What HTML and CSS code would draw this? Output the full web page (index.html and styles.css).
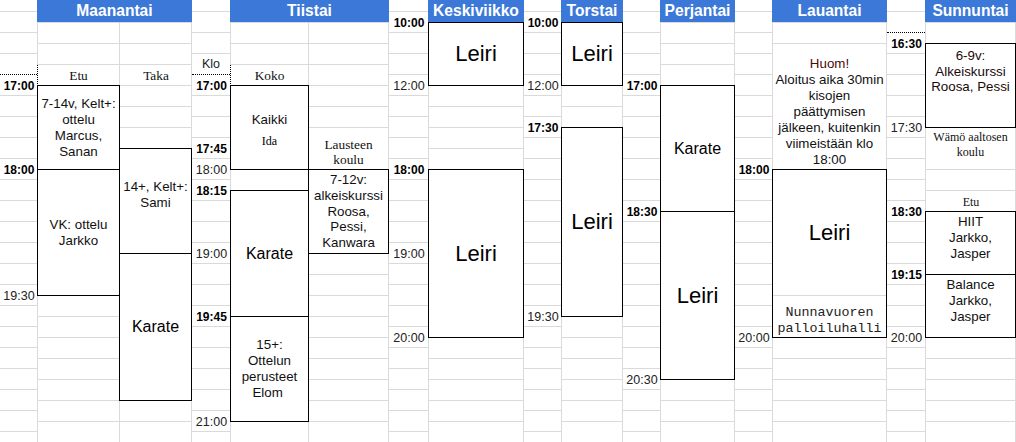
FILE: index.html
```html
<!DOCTYPE html>
<html lang="fi">
<head>
<meta charset="utf-8">
<title>Viikko-ohjelma</title>
<link rel="stylesheet" href="styles.css">
</head>
<body>
<div class="sheet">

  <div class="tcol w38">
    <div class="dot" style="--r:4"></div>
    <div class="t b" style="--r:5">17:00</div>
    <div class="t b" style="--r:9">18:00</div>
    <div class="t" style="--r:15">19:30</div>
  </div>
  <div class="day">
    <div class="hd">Maanantai</div>
    <div class="cols">
      <div class="sub w82">
        <div class="lbl dl" style="--s:3;--e:4">Etu</div>
        <div class="ev" style="--s:4;--e:8">7-14v, Kelt+:<br>ottelu<br>Marcus,<br>Sanan</div>
        <div class="ev" style="--s:8;--e:14">VK: ottelu<br>Jarkko</div>
      </div>
      <div class="sub w72">
        <div class="lbl" style="--s:3;--e:4">Taka</div>
        <div class="ev up" style="--s:7;--e:12">14+, Kelt+:<br>Sami</div>
        <div class="ev big" style="--s:12;--e:19">Karate</div>
      </div>
    </div>
  </div>

  <div class="tcol w39">
    <div class="t dot" style="--r:4">Klo</div>
    <div class="t b" style="--r:5">17:00</div>
    <div class="t b" style="--r:8">17:45</div>
    <div class="t" style="--r:9">18:00</div>
    <div class="t b" style="--r:10">18:15</div>
    <div class="t" style="--r:13">19:00</div>
    <div class="t b" style="--r:16">19:45</div>
    <div class="t" style="--r:21">21:00</div>
  </div>
  <div class="day">
    <div class="hd">Tiistai</div>
    <div class="cols">
      <div class="sub w78">
        <div class="lbl dl" style="--s:3;--e:4">Koko</div>
        <div class="ev kaikki" style="--s:4;--e:8"><span>Kaikki</span><span class="ida">Ida</span></div>
        <div class="ev big" style="--s:9;--e:15">Karate</div>
        <div class="ev" style="--s:15;--e:20">15+:<br>Ottelun<br>perusteet<br>Elom&nbsp;</div>
      </div>
      <div class="sub w80">
        <div class="lbl wh" style="--s:6;--e:8">Lausteen<br>koulu</div>
        <div class="ev tight" style="--s:8;--e:12">7-12v:<br>alkeiskurssi<br>Roosa,<br>Pessi,<br>Kanwara</div>
      </div>
    </div>
  </div>

  <div class="tcol w40">
    <div class="t b" style="--r:2">10:00</div>
    <div class="t" style="--r:5">12:00</div>
    <div class="t b" style="--r:9">18:00</div>
    <div class="t" style="--r:13">19:00</div>
    <div class="t" style="--r:17">20:00</div>
  </div>
  <div class="day">
    <div class="hd">Keskiviikko</div>
    <div class="cols">
      <div class="sub w95">
        <div class="ev huge" style="--s:1;--e:4">Leiri</div>
        <div class="ev huge" style="--s:8;--e:16">Leiri</div>
      </div>
    </div>
  </div>

  <div class="tcol w38">
    <div class="t b" style="--r:2">10:00</div>
    <div class="t" style="--r:5">12:00</div>
    <div class="t b" style="--r:7">17:30</div>
    <div class="t" style="--r:16">19:30</div>
  </div>
  <div class="day">
    <div class="hd">Torstai</div>
    <div class="cols">
      <div class="sub w61">
        <div class="ev huge" style="--s:1;--e:4">Leiri</div>
        <div class="ev huge" style="--s:6;--e:15">Leiri</div>
      </div>
    </div>
  </div>

  <div class="tcol w38">
    <div class="t b" style="--r:5">17:00</div>
    <div class="t b" style="--r:11">18:30</div>
    <div class="t" style="--r:19">20:30</div>
  </div>
  <div class="day">
    <div class="hd">Perjantai</div>
    <div class="cols">
      <div class="sub w74">
        <div class="ev big" style="--s:4;--e:10">Karate</div>
        <div class="ev huge" style="--s:10;--e:18">Leiri</div>
      </div>
    </div>
  </div>

  <div class="tcol w38">
    <div class="t b" style="--r:9">18:00</div>
    <div class="t" style="--r:17">20:00</div>
  </div>
  <div class="day">
    <div class="hd">Lauantai</div>
    <div class="cols">
      <div class="sub w114">
        <div class="note" style="--s:2;--e:8"><span class="huom">Huom!</span>Aloitus aika 30min<br>kisojen<br>päättymisen<br>jälkeen, kuitenkin<br>viimeistään klo<br>18:00</div>
        <div class="ev split" style="--s:8;--e:16">
          <div class="sp-top">Leiri</div>
          <div class="sp-bot">Nunnavuoren<br>palloiluhalli</div>
        </div>
      </div>
    </div>
  </div>

  <div class="tcol w39">
    <div class="dot" style="--r:2"></div>
    <div class="t b" style="--r:3">16:30</div>
    <div class="t" style="--r:7">17:30</div>
    <div class="t b" style="--r:11">18:30</div>
    <div class="t b" style="--r:14">19:15</div>
    <div class="t" style="--r:17">20:00</div>
  </div>
  <div class="day">
    <div class="hd">Sunnuntai</div>
    <div class="cols">
      <div class="sub w90">
        <div class="ev top" style="--s:2;--e:6">6-9v:<br>Alkeiskurssi<br>Roosa, Pessi</div>
        <div class="lbl wh wam" style="--s:6;--e:8">Wämö aaltosen<br>koulu</div>
        <div class="lbl etu2" style="--s:9;--e:10">Etu</div>
        <div class="ev top2" style="--s:10;--e:13">HIIT<br>Jarkko,<br>Jasper</div>
        <div class="ev top2" style="--s:13;--e:16">Balance<br>Jarkko,<br>Jasper</div>
      </div>
    </div>
  </div>

</div>
</body>
</html>
```

FILE: styles.css
```css
* { box-sizing: border-box; }
html, body { margin: 0; padding: 0; }
body {
  width: 1016px;
  height: 442px;
  overflow: hidden;
  background: #fff;
  font-family: "Liberation Sans", Arial, sans-serif;
  color: #000;
}
.sheet { display: flex; height: 442px; }

.tcol, .sub {
  flex: none;
  display: grid;
  grid-template-columns: 100%;
  background-image:
    linear-gradient(to left, #dadada 1px, transparent 1px),
    linear-gradient(to bottom, transparent 20px, #dadada 20px);
  background-size: 100% 100%, 100% 21px;
  background-repeat: no-repeat, repeat;
}
.tcol { grid-template-rows: 12px repeat(21, 21px); background-position: 0 0, 0 12px; }
.sub { grid-template-rows: repeat(20, 21px); }

.w38 { width: 38px; } .w39 { width: 39px; } .w40 { width: 40px; }
.w61 { width: 61px; } .w72 { width: 72px; } .w74 { width: 74px; }
.w78 { width: 78px; } .w80 { width: 80px; } .w82 { width: 82px; }
.w90 { width: 90px; } .w95 { width: 95px; } .w114 { width: 114px; }

.day { flex: none; display: flex; flex-direction: column; }
.hd {
  flex: none;
  height: 23px;
  margin-left: -1px;
  background: #3c78d8;
  border-bottom: 1px solid #dadada;
  color: #fff;
  font-weight: bold;
  font-size: 15.6px;
  line-height: 22px;
  text-align: center;
  white-space: nowrap;
}
.cols { flex: 1; display: flex; min-height: 0; }

.t {
  grid-row: var(--r);
  display: flex;
  align-items: center;
  justify-content: center;
  font-size: 12.5px;
  color: #222;
  white-space: nowrap;
}
.t.b { font-weight: bold; font-size: 12px; color: #000; }
.dot {
  grid-row: var(--r);
  background: #fff;
  margin-right: 1px;
  border-bottom: 1px dotted #000;
}

.ev {
  grid-row: var(--s) / var(--e);
  margin: -1px 0 0 -1px;
  border: 1px solid #000;
  background: #fff;
  display: flex;
  flex-direction: column;
  align-items: center;
  justify-content: center;
  text-align: center;
  font-size: 13.33px;
  line-height: 16px;
  color: #111;
  white-space: nowrap;
}
.big { font-size: 16px; line-height: 18px; color: #000; }
.huge { font-size: 22px; line-height: 26px; color: #000; }
.up { padding-bottom: 12px; }
.tight { line-height: 15.7px; }
.kaikki { padding-top: 5px; }
.ida {
  font-family: "Liberation Serif", "Times New Roman", serif;
  font-size: 12px;
  margin-top: 5px;
  color: #000;
}
.top { justify-content: flex-start; padding-top: 4px; line-height: 15.5px; color: #1a0a0a; }
.top2 { justify-content: flex-start; padding-top: 2px; }

.lbl {
  grid-row: var(--s) / var(--e);
  display: flex;
  flex-direction: column;
  justify-content: flex-end;
  align-items: center;
  text-align: center;
  font-family: "Liberation Serif", "Times New Roman", serif;
  font-size: 13.33px;
  line-height: 15px;
  padding-bottom: 3px;
  color: #111;
  white-space: nowrap;
}
.dl { margin-left: -1px; margin-right: 1px; border-left: 1px dotted #000; background: #fff; }
.wh { background: #fff; margin-right: 1px; }
.wam { justify-content: flex-start; padding: 2px 0 0; font-size: 12px; margin-bottom: 1px; }
.etu2 { font-size: 12px; line-height: 14px; }

.note {
  grid-row: var(--s) / var(--e);
  background: #fff;
  margin-right: 1px;
  display: flex;
  flex-direction: column;
  justify-content: flex-end;
  align-items: center;
  text-align: center;
  padding-bottom: 2px;
  font-size: 13.33px;
  line-height: 16px;
  color: #111;
  white-space: nowrap;
}
.huom { display: block; color: #4a0a0a; }

.split { align-items: stretch; justify-content: flex-start; }
.sp-top {
  flex: 1;
  display: flex;
  align-items: center;
  justify-content: center;
  border-bottom: 1px solid #dadada;
  font-size: 22px;
  color: #000;
}
.sp-bot {
  flex: none;
  height: 41px;
  display: flex;
  flex-direction: column;
  justify-content: flex-end;
  align-items: center;
  font-family: "Liberation Mono", "Courier New", monospace;
  font-size: 13.33px;
  line-height: 16px;
  color: #222;
}
```
